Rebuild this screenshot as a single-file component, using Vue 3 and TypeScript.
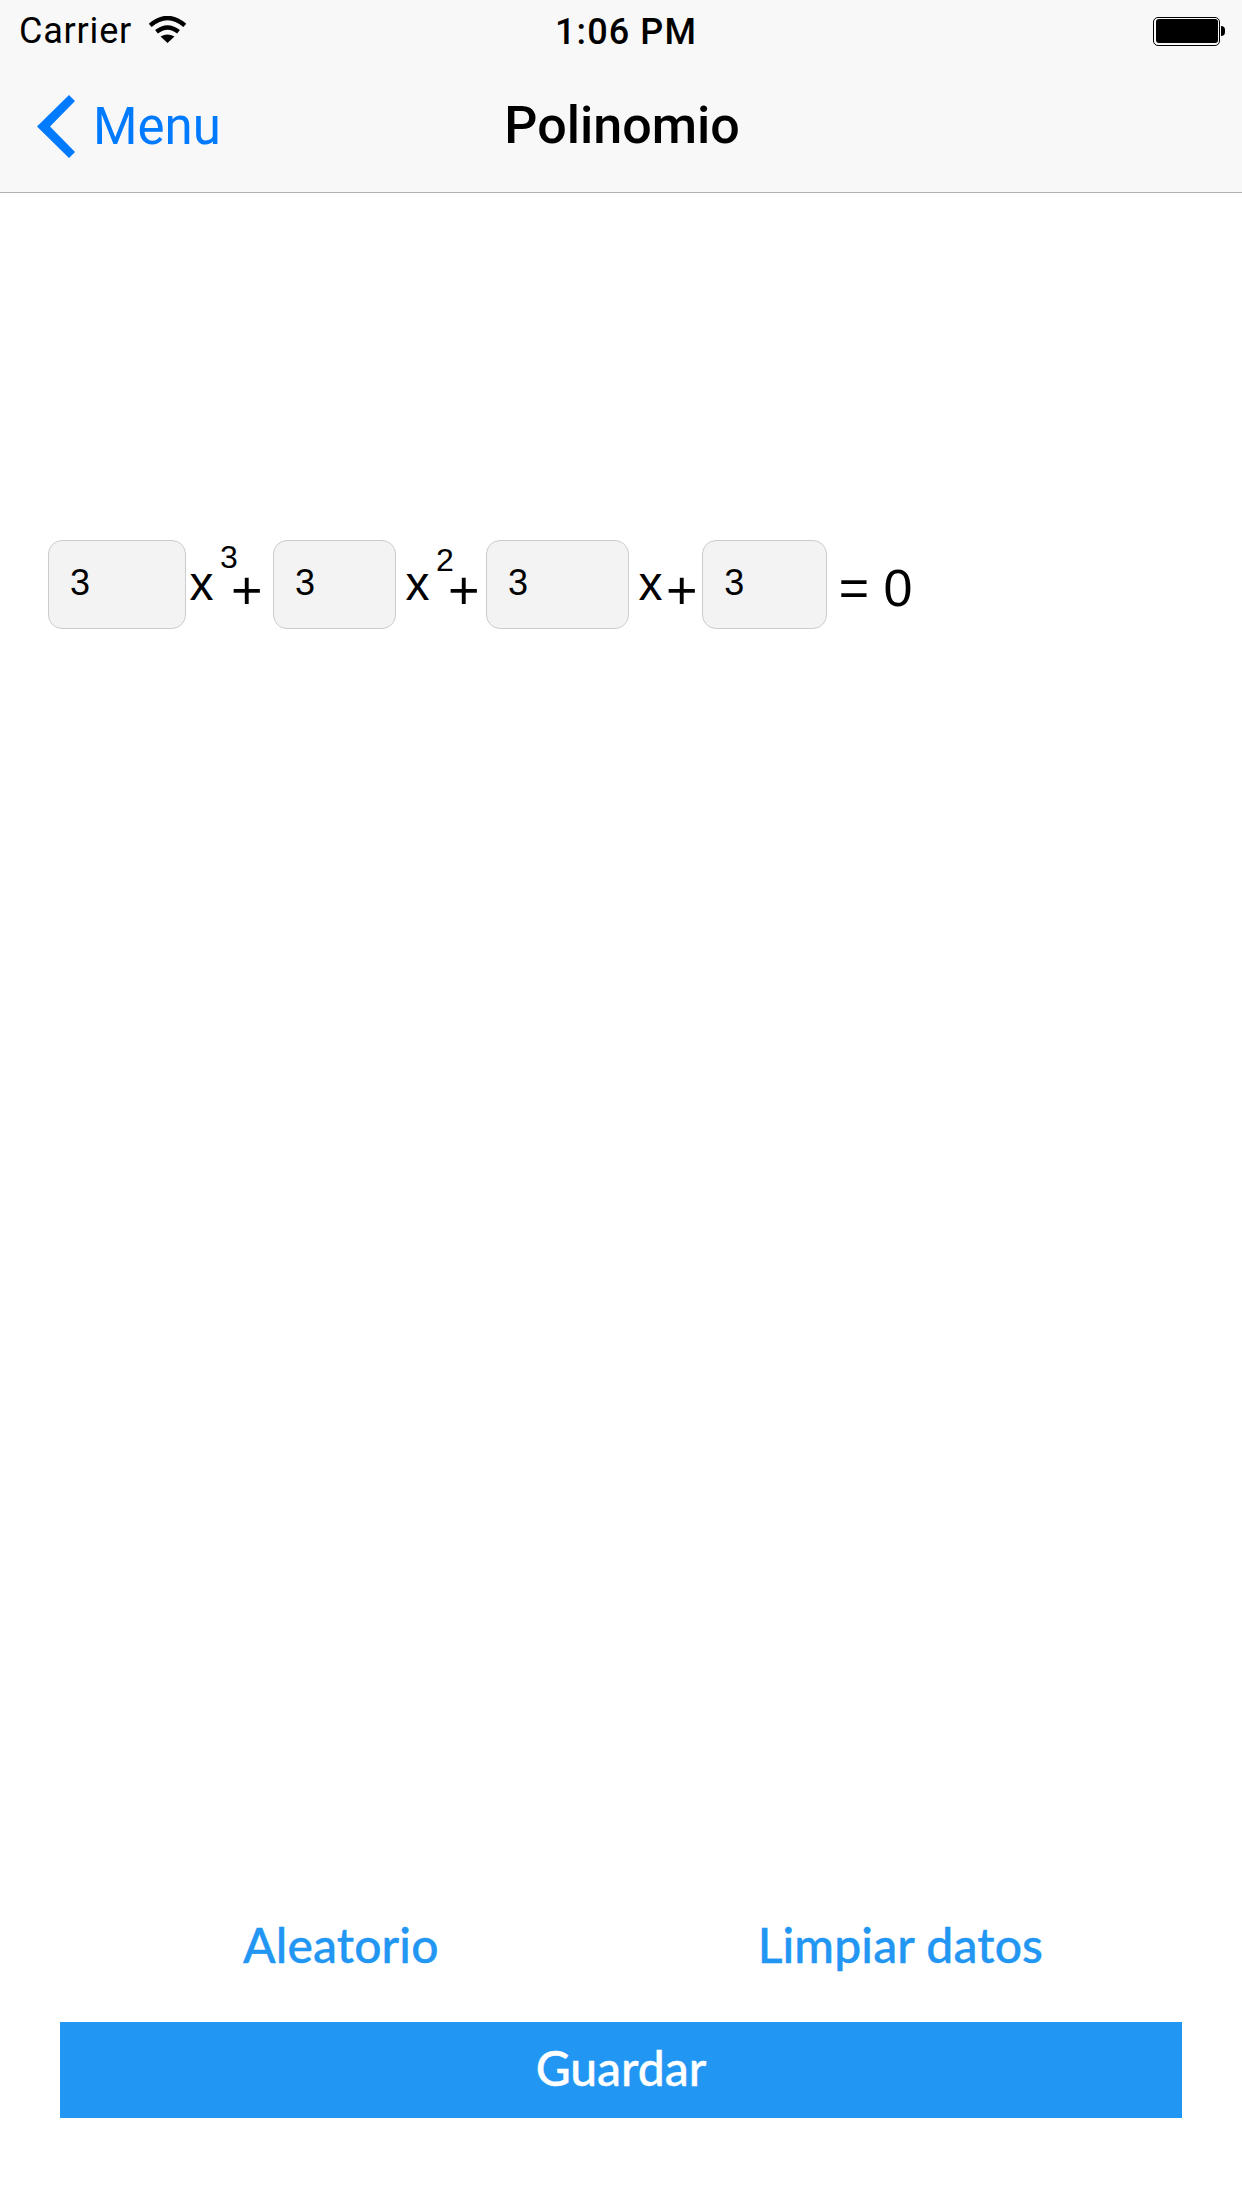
<script setup lang="ts">
type Term = { value: string; cls: string; base?: string; sup?: string }

const terms: Term[] = [
  { value: '3', cls: 'a', base: 'x', sup: '3' },
  { value: '3', cls: 'b', base: 'x', sup: '2' },
  { value: '3', cls: 'c', base: 'x' },
  { value: '3', cls: 'd' },
]
</script>

<template>
  <div class="screen">
    <header class="bar">
      <div class="status">
        <div class="status-left">
          <span class="carrier">Carrier</span>
          <svg class="wifi" viewBox="0 0 37 27" width="37" height="27">
            <path d="M18.5 27 L11.5 20.6 Q18.5 16.4 25.5 20.6 Z" fill="#000" />
            <path d="M7.5 15.8 Q18.5 7 29.5 15.8" fill="none" stroke="#000" stroke-width="4.4" />
            <path d="M1.2 9.4 Q18.5 -5.4 35.8 9.4" fill="none" stroke="#000" stroke-width="4.4" />
          </svg>
        </div>
        <span class="time">1:06 PM</span>
        <div class="battery">
          <div class="battery-body"><div class="battery-fill"></div></div>
          <div class="battery-nub"></div>
        </div>
      </div>
      <nav class="nav">
        <div class="back">
          <svg class="chev" viewBox="0 0 38 63" width="38" height="63">
            <polygon points="32,0 38,6 13,31.5 38,57 32,63 0,31.5" fill="#007aff" />
          </svg>
          <span class="back-text">Menu</span>
        </div>
        <h1 class="title">Polinomio</h1>
      </nav>
    </header>

    <main class="content">
      <div class="equation">
        <template v-for="t in terms" :key="t.cls">
          <div class="field" :class="'field-' + t.cls"><span>{{ t.value }}</span></div>
          <span v-if="t.base" class="var" :class="'var-' + t.cls">{{ t.base }}</span>
          <span v-if="t.sup" class="sup" :class="'sup-' + t.cls">{{ t.sup }}</span>
          <span v-if="t.base" class="plus" :class="'plus-' + t.cls">+</span>
        </template>
        <span class="equals">= 0</span>
      </div>
    </main>

    <footer class="actions">
      <div class="links">
        <span class="link">Aleatorio</span>
        <span class="link">Limpiar datos</span>
      </div>
      <div class="save"><span>Guardar</span></div>
    </footer>
  </div>
</template>

<style>
html, body { margin: 0; background: #fff; }
</style>

<style scoped>
.screen {
  width: 1242px;
  height: 2208px;
  display: flex;
  flex-direction: column;
  background: #fff;
  overflow: hidden;
  font-family: "Liberation Sans", Arial, sans-serif;
  color: #000;
}
.bar {
  height: 193px;
  box-sizing: border-box;
  background: #f8f8f8;
  border-bottom: 1.5px solid #b2b2b2;
  font-family: Roboto, "Liberation Sans", sans-serif;
}
.status {
  height: 60px;
  box-sizing: border-box;
  display: flex;
  align-items: center;
  position: relative;
  padding: 2px 17px 0 19px;
  justify-content: space-between;
}
.status-left { display: flex; align-items: center; gap: 17px; }
.carrier { font-size: 36px; letter-spacing: 0.8px; line-height: 58px; }
.wifi { display: block; margin-top: -3px; }
.time {
  position: absolute;
  left: 555px;
  top: 1.5px;
  font-size: 36px;
  font-weight: 500;
  letter-spacing: 1.1px;
  line-height: 60px;
}
.battery { display: flex; align-items: center; }
.battery-body {
  width: 67px;
  height: 29px;
  box-sizing: border-box;
  border: 1px solid #000;
  border-radius: 5px;
  padding: 1.5px;
  background: #f8f8f8;
}
.battery-fill { height: 100%; background: #000; border-radius: 3px; }
.battery-nub {
  width: 4px;
  height: 10px;
  background: #000;
  border-radius: 0 5px 5px 0;
  margin-left: 1px;
}
.nav {
  height: 131px;
  box-sizing: border-box;
  padding-left: 2px;
  position: relative;
  display: flex;
  align-items: center;
  justify-content: center;
}
.back {
  position: absolute;
  left: 37px;
  top: 35px;
  display: flex;
  align-items: center;
  gap: 18px;
}
.chev { display: block; }
.back-text { font-size: 51px; color: #007aff; line-height: 63px; font-weight: 400; }
.title { margin: 0; font-size: 52px; font-weight: 500; line-height: 134px; }

.content { flex: 1; }
.equation {
  margin-top: 347px;
  padding-left: 48px;
  display: flex;
  align-items: flex-start;
  height: 89px;
}
.field {
  height: 89px;
  box-sizing: border-box;
  background: #f3f3f3;
  border: 1.5px solid #cccccc;
  border-radius: 14px;
  font-size: 36px;
  line-height: 83px;
  padding-left: 21px;
}
.field-a { width: 138px; }
.field-b { width: 123px; margin-left: 10.5px; }
.field-c { width: 143px; margin-left: 6.5px; }
.field-d { width: 125px; margin-left: 4.5px; }
.var { font-size: 48px; line-height: 55px; margin-top: 16px; margin-left: 3.5px; }
.var-b, .var-c { margin-left: 9.5px; }
.sup { font-size: 32px; line-height: 26px; margin-top: 4.4px; margin-left: 6.5px; }
.sup-b { margin-top: 6.9px; }
.plus { font-size: 54px; line-height: 34px; margin-top: 32.9px; margin-left: -6.8px; }
.plus-b { margin-left: -5.8px; }
.plus-c { margin-left: 3.5px; }
.equals { font-size: 52px; line-height: 60px; margin-top: 17.5px; margin-left: 11.5px; }

.actions { padding: 0 60px; height: 308px; }
.links {
  display: flex;
  height: 88px;
  align-items: center;
}
.link {
  font-family: Lato, sans-serif;
  font-size: 48px;
  font-weight: 500;
  color: #2196f3;
  letter-spacing: 0.15px;
  -webkit-text-stroke: 0.4px #2196f3;
}
.link:first-child { margin-left: 183px; }
.link:last-child { margin-left: 319px; }
.save {
  margin-top: 34px;
  height: 96px;
  box-sizing: border-box;
  padding-bottom: 6px;
  background: #2196f3;
  color: #fff;
  font-family: Lato, sans-serif;
  font-size: 48px;
  font-weight: 500;
  -webkit-text-stroke: 0.4px #fff;
  display: flex;
  align-items: center;
  justify-content: center;
}
</style>
